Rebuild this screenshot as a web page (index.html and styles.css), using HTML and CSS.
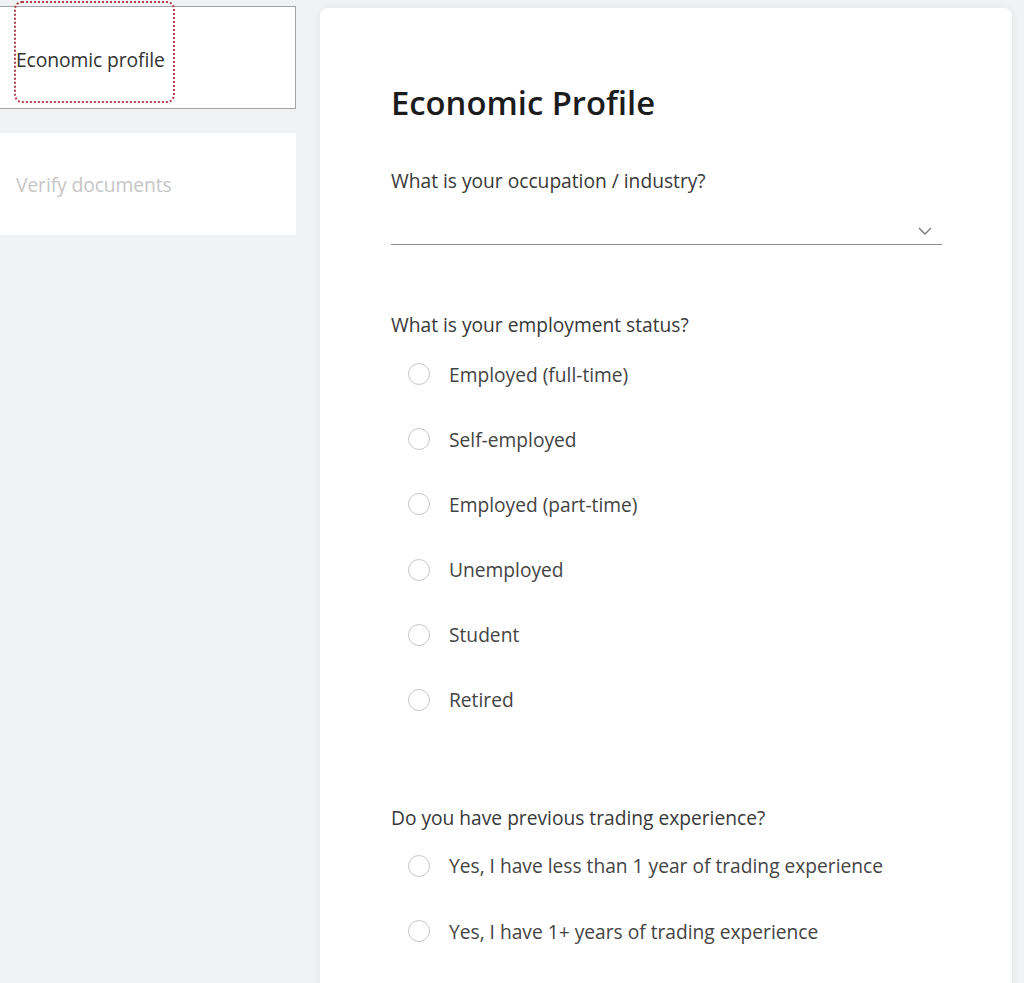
FILE: index.html
```html
<!DOCTYPE html>
<html lang="en">
<head>
    <meta charset="UTF-8">
    <meta name="viewport" content="width=device-width, initial-scale=1.0">
    <title>Economic Profile</title>
    <link rel="stylesheet" href="styles.css">
</head>
<body>
    <div class="layout">
        <nav class="steps">
            <div class="step step-active">
                <span class="step-label">Economic profile</span>
                <span class="focus-ring"></span>
            </div>
            <div class="step step-disabled">
                <span class="step-label">Verify documents</span>
            </div>
        </nav>
        <main class="card">
            <h1>Economic Profile</h1>

            <div class="question">
                <label class="question-label">What is your occupation / industry?</label>
                <div class="select">
                    <svg width="14" height="8" viewBox="0 0 14 8" fill="none" stroke="#7a7a7a" stroke-width="1.4">
                        <path d="M1 1l6 6 6-6"/>
                    </svg>
                </div>
            </div>

            <div class="question q-employment">
                <div class="question-label">What is your employment status?</div>
                <div class="options">
                    <label class="option"><span class="radio"></span>Employed (full-time)</label>
                    <label class="option"><span class="radio"></span>Self-employed</label>
                    <label class="option"><span class="radio"></span>Employed (part-time)</label>
                    <label class="option"><span class="radio"></span>Unemployed</label>
                    <label class="option"><span class="radio"></span>Student</label>
                    <label class="option"><span class="radio"></span>Retired</label>
                </div>
            </div>

            <div class="question q-trading">
                <div class="question-label">Do you have previous trading experience?</div>
                <div class="options">
                    <label class="option"><span class="radio"></span>Yes, I have less than 1 year of trading experience</label>
                    <label class="option"><span class="radio"></span>Yes, I have 1+ years of trading experience</label>
                </div>
            </div>
        </main>
    </div>
</body>
</html>
```

FILE: styles.css
```css
body {
    margin: 0;
    background-color: #f1f2f4;
    font-family: "Open Sans", "Noto Sans", Arial, sans-serif;
    color: #333;
    overflow: hidden;
}
.layout {
    display: flex;
    align-items: flex-start;
    gap: 24px;
}
.steps {
    width: 297px;
    margin-left: -1px;
    padding-top: 6px;
    display: flex;
    flex-direction: column;
    gap: 24px;
}
.step {
    position: relative;
    height: 102px;
    background: #fff;
    display: flex;
    align-items: center;
    padding-left: 17px;
    box-sizing: border-box;
    font-size: 19.3px;
    letter-spacing: -0.1px;
}
.step-active {
    height: 103px;
    border: 1px solid #a3a3a3;
    padding-left: 16px;
    color: #333;
}
.step-active .step-label {
    padding-top: 4px;
}
.step-disabled {
    color: #c6c6c6;
}
.focus-ring {
    position: absolute;
    left: 14px;
    top: -6px;
    width: 161px;
    height: 102px;
    box-sizing: border-box;
    border: 2px dotted #b3404f;
    border-radius: 8px;
}
.card {
    width: 692px;
    height: 1000px;
    margin-top: 8px;
    background: #fff;
    border-radius: 8px 8px 0 0;
    box-shadow: 0 0 8px rgba(0, 0, 0, 0.06);
    padding: 75px 70px 0 71px;
    box-sizing: border-box;
}
.card h1 {
    margin: 0;
    font-size: 32.8px;
    line-height: 40px;
    font-weight: 600;
    color: #1c1c1c;
}
.question {
    margin-top: 46px;
}
.question-label {
    display: block;
    font-size: 19.2px;
    line-height: 24px;
    color: #383838;
}
.select {
    margin-top: 12px;
    height: 40px;
    padding: 12px 10px 0 0;
    box-sizing: border-box;
    border-bottom: 1px solid #8c8c8c;
    display: flex;
    justify-content: flex-end;
    align-items: center;
}
.q-employment {
    margin-top: 68px;
}
.q-trading {
    margin-top: 86px;
}
.options {
    margin-top: 17px;
    padding-left: 17px;
    display: flex;
    flex-direction: column;
    gap: 25.2px;
}
.q-trading .options {
    margin-top: 16px;
}
.option {
    height: 40px;
    display: flex;
    align-items: center;
    gap: 19px;
    font-size: 19.2px;
    color: #444;
}
.radio {
    width: 22px;
    height: 22px;
    border: 1.5px solid #c8c8c8;
    border-radius: 50%;
    box-sizing: border-box;
    flex-shrink: 0;
}
```
